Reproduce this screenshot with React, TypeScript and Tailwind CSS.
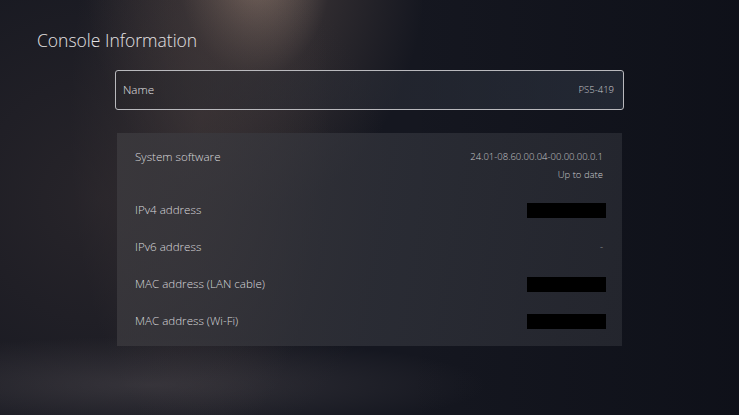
const rows: { label: string; value?: string; hidden?: boolean }[] = [
  { label: "IPv4 address", hidden: true },
  { label: "IPv6 address", value: "-" },
  { label: "MAC address (LAN cable)", hidden: true },
  { label: "MAC address (Wi-Fi)", hidden: true },
];

export default function App() {
  return (
    <div
      className="relative h-[415px] w-[739px] overflow-hidden bg-[#151720] text-[#d9d9dc]"
      style={{ fontFamily: '"Open Sans", "Noto Sans", sans-serif' }}
    >
      <div className="pointer-events-none absolute inset-0 bg-[radial-gradient(ellipse_170px_240px_at_255px_-30px,rgba(160,135,120,0.8),rgba(95,80,75,0.35)_45%,transparent_100%)]" />
      <div className="pointer-events-none absolute inset-0 bg-[radial-gradient(ellipse_130px_330px_at_200px_120px,rgba(80,68,66,0.45),transparent_100%)]" />
      <div className="pointer-events-none absolute inset-0 bg-[radial-gradient(ellipse_420px_420px_at_100px_200px,rgba(58,50,52,0.5),transparent_70%)]" />
      <div className="pointer-events-none absolute inset-0 bg-[radial-gradient(ellipse_420px_60px_at_150px_385px,rgba(85,80,85,0.45),transparent_80%)]" />
      <div className="pointer-events-none absolute inset-0 bg-[linear-gradient(90deg,transparent_55%,rgba(8,10,18,0.5))]" />

      <div className="relative">
        <h1 className="pl-[37px] pt-[28px] text-[17.5px] font-light leading-[24px] text-[#e4e2e3]">
          Console Information
        </h1>

        <div className="ml-[115px] mt-[18px] flex h-[40px] w-[509px] items-center justify-between rounded-[3px] border-[1.5px] border-[#b9b9bd] bg-[linear-gradient(90deg,rgba(40,38,42,0.5),rgba(48,56,70,0.55))] pl-[7px] pr-[9px]">
          <span className="text-[11.6px] font-light text-[#e0e0e2]">Name</span>
          <span className="text-[9.5px] font-light text-[#c8c8cc]">PS5-419</span>
        </div>

        <div className="ml-[117px] mt-[23px] w-[505px] bg-[linear-gradient(100deg,rgba(62,60,64,0.75),rgba(48,50,58,0.75)_55%,rgba(40,42,50,0.8))] pb-[15px] pl-[18px] pr-[16px] pt-[14px]">
          <div className="flex justify-between">
            <span className="text-[11.6px] font-light leading-[20px] text-[#d8d8db]">System software</span>
            <div className="flex flex-col items-end pr-[3px]">
              <span className="text-[9.5px] font-light leading-[20px] text-[#c8c8cc]">24.01-08.60.00.04-00.00.00.0.1</span>
              <span className="mt-[-2px] text-[9.5px] font-light leading-[20px] text-[#c8c8cc]">Up to date</span>
            </div>
          </div>
          <div className="mt-[15px] flex flex-col gap-[17px]">
            {rows.map((r) => (
              <div key={r.label} className="flex h-[20px] items-center justify-between">
                <span className="text-[11.6px] font-light text-[#d8d8db]">{r.label}</span>
                {r.hidden ? (
                  <div className="h-[15px] w-[79px] bg-black" />
                ) : (
                  <span className="pr-[3px] text-[9.5px] font-light text-[#a8a8ac]">{r.value}</span>
                )}
              </div>
            ))}
          </div>
        </div>
      </div>
    </div>
  );
}
